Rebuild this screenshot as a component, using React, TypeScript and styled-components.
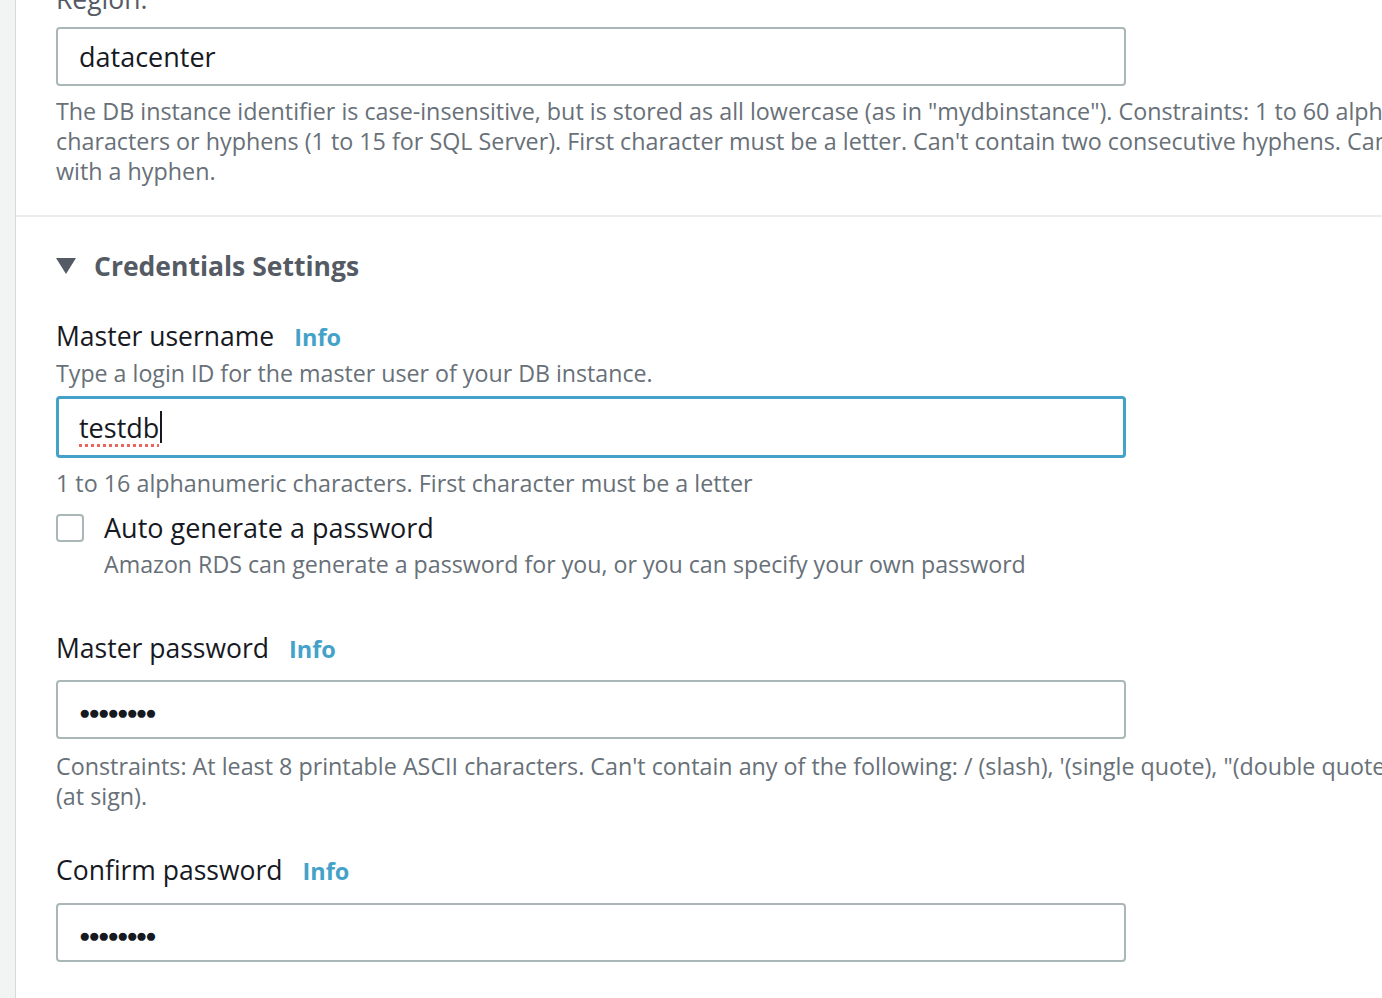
import React from "react";
import styled, { createGlobalStyle } from "styled-components";

const Global = createGlobalStyle`
  html, body { margin: 0; padding: 0; background: #fff; }
  body { font-family: "Open Sans", "Noto Sans", Arial, sans-serif; overflow: hidden; width: 1382px; height: 998px; }
`;

const Page = styled.div`
  display: flex;
  width: 1382px;
  height: 998px;
  overflow: hidden;
`;

const SideStrip = styled.div`
  width: 15px;
  flex: none;
  background: #f2f3f3;
  border-right: 1px solid #d5dbdb;
`;

const Panel = styled.div`
  flex: 1;
  min-width: 0;
  background: #fff;
  overflow: hidden;
`;

const Section = styled.div`
  padding: 0 0 0 40px;
`;

const Divider = styled.div`
  height: 2px;
  background: #eaeded;
  margin-top: 29px;
`;

const Label = styled.div<{ $top?: number }>`
  display: flex;
  align-items: baseline;
  gap: 20px;
  font-size: 26.5px;
  line-height: 36px;
  color: #16191f;
  white-space: nowrap;
  margin-top: ${(p) => p.$top ?? 0}px;
`;

const RegionLabel = styled(Label)`
  margin-top: -19px;
  color: #545b64;
`;

const InfoLink = styled.span`
  color: #44a2c9;
  font-weight: 700;
  font-size: 23.5px;
`;

const Description = styled.div<{ $top?: number }>`
  font-size: 23.2px;
  line-height: 30px;
  color: #687078;
  white-space: nowrap;
  margin-top: ${(p) => p.$top ?? 0}px;
`;

const Help = styled.div<{ $top?: number }>`
  font-size: 23.3px;
  line-height: 30px;
  color: #687078;
  white-space: nowrap;
  margin-top: ${(p) => p.$top ?? 0}px;
`;

const Line = styled.div``;

const Input = styled.div<{ $focused?: boolean; $top?: number }>`
  box-sizing: border-box;
  width: 1070px;
  height: ${(p) => (p.$focused ? 62 : 59)}px;
  margin-top: ${(p) => p.$top ?? 0}px;
  border: ${(p) => (p.$focused ? "3px solid #44a2c9" : "2px solid #aab7b8")};
  border-radius: 4px;
  display: flex;
  align-items: center;
  padding-left: ${(p) => (p.$focused ? 20 : 21)}px;
  font-size: 27px;
  color: #16191f;
`;

const Misspelled = styled.span`
  text-decoration: underline dotted #e8675a;
  text-decoration-thickness: 3px;
  text-underline-offset: 6px;
`;

const Caret = styled.span`
  display: inline-block;
  width: 2px;
  height: 32px;
  background: #16191f;
  margin-left: 1px;
`;

const Dots = styled.span`
  font-size: 19px;
  letter-spacing: -2px;
  color: #16191f;
  padding-top: 4px;
`;

const Heading = styled.div`
  display: flex;
  align-items: center;
  gap: 18px;
  margin-top: 31px;
  font-size: 26.5px;
  line-height: 36px;
  font-weight: 700;
  color: #545b64;
  white-space: nowrap;
`;

const Triangle = styled.svg`
  width: 20px;
  height: 16px;
  flex: none;
`;

const CheckRow = styled.div`
  display: flex;
  gap: 20px;
  margin-top: 15px;
`;

const CheckBox = styled.div`
  box-sizing: border-box;
  width: 28px;
  height: 28px;
  border: 2px solid #aab7b8;
  border-radius: 4px;
  flex: none;
  margin-top: 1px;
`;

const CheckText = styled.div`
  display: flex;
  flex-direction: column;
`;

const CheckLabel = styled.div`
  font-size: 27px;
  line-height: 30px;
  color: #16191f;
  white-space: nowrap;
`;

export default function App() {
  return (
    <>
      <Global />
      <Page>
        <SideStrip />
        <Panel>
          <Section>
            <RegionLabel>Region.</RegionLabel>
            <Input $top={10}>datacenter</Input>
            <Help $top={10}>
              <Line>The DB instance identifier is case-insensitive, but is stored as all lowercase (as in "mydbinstance"). Constraints: 1 to 60 alphanumeric</Line>
              <Line>characters or hyphens (1 to 15 for SQL Server). First character must be a letter. Can't contain two consecutive hyphens. Can't end</Line>
              <Line>with a hyphen.</Line>
            </Help>
          </Section>
          <Divider />
          <Section>
            <Heading>
              <Triangle viewBox="0 0 20 16">
                <polygon points="0,0 20,0 10,16" fill="#545b64" />
              </Triangle>
              Credentials Settings
            </Heading>
            <Label $top={34}>
              Master username <InfoLink>Info</InfoLink>
            </Label>
            <Description $top={3}>Type a login ID for the master user of your DB instance.</Description>
            <Input $focused $top={8}>
              <Misspelled>testdb</Misspelled>
              <Caret />
            </Input>
            <Help $top={10}>1 to 16 alphanumeric characters. First character must be a letter</Help>
            <CheckRow>
              <CheckBox />
              <CheckText>
                <CheckLabel>Auto generate a password</CheckLabel>
                <Description $top={6}>Amazon RDS can generate a password for you, or you can specify your own password</Description>
              </CheckText>
            </CheckRow>
            <Label $top={51}>
              Master password <InfoLink>Info</InfoLink>
            </Label>
            <Input $top={13}>
              <Dots>●●●●●●●●</Dots>
            </Input>
            <Help $top={12}>
              <Line>Constraints: At least 8 printable ASCII characters. Can't contain any of the following: / (slash), '(single quote), "(double quote) and @</Line>
              <Line>(at sign).</Line>
            </Help>
            <Label $top={41}>
              Confirm password <InfoLink>Info</InfoLink>
            </Label>
            <Input $top={14}>
              <Dots>●●●●●●●●</Dots>
            </Input>
          </Section>
        </Panel>
      </Page>
    </>
  );
}
